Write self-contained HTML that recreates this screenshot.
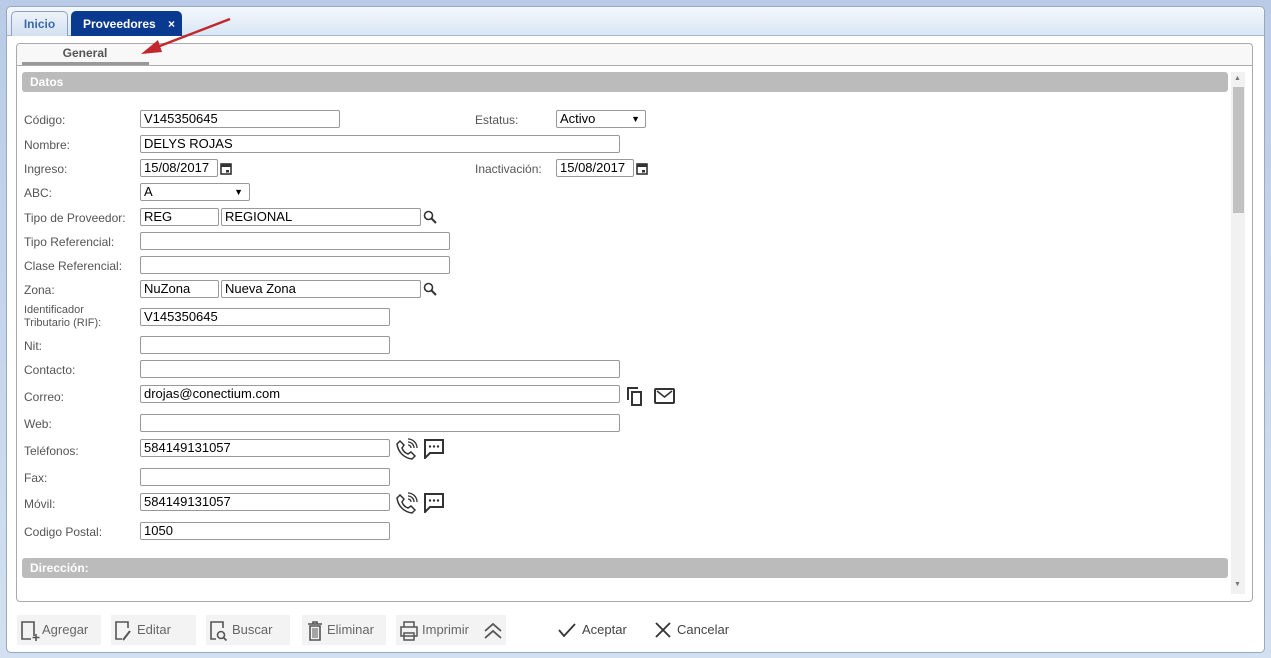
<!DOCTYPE html><html><head><meta charset="utf-8"><style>
*{box-sizing:border-box;margin:0;padding:0}
body{width:1271px;height:658px;background:linear-gradient(#b9cbe6,#d3e0f1);font-family:"Liberation Sans",sans-serif;position:relative;overflow:hidden}
.a{position:absolute}
.win{left:6px;top:6px;width:1259px;height:647px;background:#fff;border:1px solid #9aa8bb;border-radius:5px}
.hdr{left:7px;top:7px;width:1257px;height:29px;background:linear-gradient(#f4f8fd,#d9e6f5);border-bottom:1px solid #a9b8cc;border-radius:5px 5px 0 0}
.tab{top:11px;height:25px;border:1px solid #8fa3c0;border-bottom:none;border-radius:5px 5px 0 0;font-size:12px;font-weight:bold;line-height:24px}
.panel{left:16px;top:43px;width:1237px;height:559px;border:1px solid #aaa;border-radius:4px}
.lbl{font-size:12px;color:#555;left:24px}
.in{height:18px;border:1px solid #999;border-radius:2px;font-size:13px;line-height:16px;padding-left:3px;color:#000;background:#fff}
.bar{left:22px;width:1206px;height:20px;background:#bbb;border-radius:3px;color:#fff;font-weight:bold;font-size:12px;line-height:20px;padding-left:8px}
.btn{top:615px;height:30px;background:#f3f3f3;font-size:13px;color:#666;line-height:30px}
.btn svg{position:absolute;left:3px;top:5px}
.btn span{position:absolute;top:0}
</style></head><body>
<div class="a win"></div><div class="a hdr"></div>
<div class="a tab" style="left:11px;width:57px;background:linear-gradient(#eef3fa,#d3e0f0);color:#3a6aa8;text-align:center">Inicio</div>
<div class="a tab" style="left:71px;width:111px;background:#0a3a8f;border-color:#0a3a8f;color:#fff;padding-left:11px">Proveedores<span style="position:absolute;left:96px">×</span></div>
<div class="a panel"></div>
<div class="a" style="left:17px;top:44px;width:1235px;height:22px;background:#f8f8f8;border-bottom:1px solid #aaa;border-radius:4px 4px 0 0"></div>
<div class="a" style="left:22px;top:46px;width:126px;font-size:12px;font-weight:bold;color:#555;text-align:center">General</div>
<div class="a" style="left:22px;top:62px;width:127px;height:3px;background:#999"></div>
<svg class="a" style="left:138px;top:16px" width="100" height="42"><line x1="92" y1="3" x2="14" y2="33" stroke="#c1272d" stroke-width="2.5"/><polygon points="3,38 20,24 24,36" fill="#c1272d"/></svg>
<div class="a bar" style="top:72px">Datos</div>
<div class="a bar" style="top:558px">Dirección:</div>
<div class="a" style="left:1231px;top:72px;width:14px;height:522px;background:#f1f1f1"></div>
<div class="a" style="left:1233px;top:87px;width:11px;height:126px;background:#c1c1c1"></div>
<div class="a" style="left:1234px;top:75px;font-size:7px;color:#777">▲</div>
<div class="a" style="left:1234px;top:581px;font-size:7px;color:#777">▼</div>

<div class="a lbl" style="top:113px">Código:</div><div class="a in" style="left:140px;top:110px;width:200px">V145350645</div>
<div class="a lbl" style="left:475px;top:113px">Estatus:</div><div class="a in" style="left:556px;top:110px;width:90px">Activo<span style="position:absolute;right:5px;font-size:9px">▼</span></div>
<div class="a lbl" style="top:138px">Nombre:</div><div class="a in" style="left:140px;top:135px;width:480px">DELYS ROJAS</div>
<div class="a lbl" style="top:162px">Ingreso:</div><div class="a in" style="left:140px;top:159px;width:78px">15/08/2017</div>
<svg class="a" style="left:220px;top:162px" width="12" height="13"><rect x="1" y="2" width="10" height="10" fill="none" stroke="#333" stroke-width="1.6"/><rect x="1" y="2" width="10" height="3" fill="#333"/><rect x="6" y="8" width="3" height="2.5" fill="#333"/></svg>
<div class="a lbl" style="left:475px;top:162px">Inactivación:</div><div class="a in" style="left:556px;top:159px;width:78px">15/08/2017</div>
<svg class="a" style="left:636px;top:162px" width="12" height="13"><rect x="1" y="2" width="10" height="10" fill="none" stroke="#333" stroke-width="1.6"/><rect x="1" y="2" width="10" height="3" fill="#333"/><rect x="6" y="8" width="3" height="2.5" fill="#333"/></svg>
<div class="a lbl" style="top:186px">ABC:</div><div class="a in" style="left:140px;top:183px;width:110px">A<span style="position:absolute;right:6px;font-size:9px">▼</span></div>
<div class="a lbl" style="top:211px">Tipo de Proveedor:</div><div class="a in" style="left:140px;top:208px;width:79px">REG</div><div class="a in" style="left:221px;top:208px;width:200px">REGIONAL</div>
<svg class="a" style="left:423px;top:210px" width="14" height="14"><circle cx="5.5" cy="5.5" r="4" fill="none" stroke="#333" stroke-width="1.6"/><line x1="8.5" y1="8.5" x2="13" y2="13" stroke="#333" stroke-width="2"/></svg>
<div class="a lbl" style="top:235px">Tipo Referencial:</div><div class="a in" style="left:140px;top:232px;width:310px"></div>
<div class="a lbl" style="top:259px">Clase Referencial:</div><div class="a in" style="left:140px;top:256px;width:310px"></div>
<div class="a lbl" style="top:283px">Zona:</div><div class="a in" style="left:140px;top:280px;width:79px">NuZona</div><div class="a in" style="left:221px;top:280px;width:200px">Nueva Zona</div>
<svg class="a" style="left:423px;top:282px" width="14" height="14"><circle cx="5.5" cy="5.5" r="4" fill="none" stroke="#333" stroke-width="1.6"/><line x1="8.5" y1="8.5" x2="13" y2="13" stroke="#333" stroke-width="2"/></svg>
<div class="a lbl" style="top:304px;font-size:11px;line-height:13px">Identificador<br>Tributario (RIF):</div><div class="a in" style="left:140px;top:308px;width:250px">V145350645</div>
<div class="a lbl" style="top:339px">Nit:</div><div class="a in" style="left:140px;top:336px;width:250px"></div>
<div class="a lbl" style="top:363px">Contacto:</div><div class="a in" style="left:140px;top:360px;width:480px"></div>
<div class="a lbl" style="top:390px">Correo:</div><div class="a in" style="left:140px;top:385px;width:480px">drojas@conectium.com</div>
<svg class="a" style="left:626px;top:385px" width="20" height="22"><path d="M2 15V3h10" fill="none" stroke="#333" stroke-width="2"/><rect x="6" y="7" width="9" height="13" fill="none" stroke="#333" stroke-width="2"/></svg>
<svg class="a" style="left:654px;top:387px" width="22" height="18"><rect x="1" y="2" width="19" height="14" rx="1" fill="none" stroke="#333" stroke-width="2"/><path d="M3 4l7.5 6L18 4" fill="none" stroke="#333" stroke-width="1.6"/></svg>
<div class="a lbl" style="top:417px">Web:</div><div class="a in" style="left:140px;top:414px;width:480px"></div>
<div class="a lbl" style="top:444px">Teléfonos:</div><div class="a in" style="left:140px;top:439px;width:250px">584149131057</div>
<div class="a lbl" style="top:471px">Fax:</div><div class="a in" style="left:140px;top:468px;width:250px"></div>
<div class="a lbl" style="top:497px">Móvil:</div><div class="a in" style="left:140px;top:493px;width:250px">584149131057</div>
<div class="a lbl" style="top:525px">Codigo Postal:</div><div class="a in" style="left:140px;top:522px;width:250px">1050</div>

<svg class="a" style="left:396px;top:438px" width="22" height="22"><path d="M4 3l4 4-2 3c1 3 3 5 6 6l3-2 4 4-3 3C8 20 2 14 1 6z" fill="none" stroke="#333" stroke-width="1.5"/><path d="M12 7a3 3 0 013 3M12 4a6 6 0 016 6M12 1a9 9 0 019 9" fill="none" stroke="#333" stroke-width="1.3"/></svg>
<svg class="a" style="left:424px;top:439px" width="20" height="20"><path d="M1 1h18v13H6l-5 5z" fill="none" stroke="#333" stroke-width="2"/><circle cx="6" cy="7.5" r="1.2" fill="#333"/><circle cx="10" cy="7.5" r="1.2" fill="#333"/><circle cx="14" cy="7.5" r="1.2" fill="#333"/></svg>
<svg class="a" style="left:396px;top:492px" width="22" height="22"><path d="M4 3l4 4-2 3c1 3 3 5 6 6l3-2 4 4-3 3C8 20 2 14 1 6z" fill="none" stroke="#333" stroke-width="1.5"/><path d="M12 7a3 3 0 013 3M12 4a6 6 0 016 6M12 1a9 9 0 019 9" fill="none" stroke="#333" stroke-width="1.3"/></svg>
<svg class="a" style="left:424px;top:493px" width="20" height="20"><path d="M1 1h18v13H6l-5 5z" fill="none" stroke="#333" stroke-width="2"/><circle cx="6" cy="7.5" r="1.2" fill="#333"/><circle cx="10" cy="7.5" r="1.2" fill="#333"/><circle cx="14" cy="7.5" r="1.2" fill="#333"/></svg>

<div class="a btn" style="left:17px;width:84px"><svg width="20" height="22"><path d="M14 16V2H2v17h9" fill="none" stroke="#555" stroke-width="1.6"/><path d="M16 14v7M12.5 17.5h7" stroke="#555" stroke-width="1.6"/></svg><span style="left:25px">Agregar</span></div>
<div class="a btn" style="left:111px;width:85px"><svg width="20" height="22"><path d="M14 8V2H2v17h6" fill="none" stroke="#555" stroke-width="1.6"/><path d="M9 20l7-9" stroke="#555" stroke-width="2"/></svg><span style="left:26px">Editar</span></div>
<div class="a btn" style="left:206px;width:84px"><svg width="20" height="22"><path d="M14 8V2H2v17h5" fill="none" stroke="#555" stroke-width="1.6"/><circle cx="12" cy="15" r="3.5" fill="none" stroke="#555" stroke-width="1.6"/><path d="M14.5 17.5l3 3" stroke="#555" stroke-width="1.8"/></svg><span style="left:26px">Buscar</span></div>
<div class="a btn" style="left:302px;width:84px"><svg width="20" height="22"><path d="M3 4h14M8 4V2h4v2M5 6h10v14H5z" fill="none" stroke="#555" stroke-width="1.6"/><path d="M8 8v10M10 8v10M12 8v10" stroke="#555"/></svg><span style="left:25px">Eliminar</span></div>
<div class="a btn" style="left:396px;width:110px"><svg width="20" height="22"><path d="M5 7V2h10v5M2 7h16v9H2zM5 13h10v7H5z" fill="none" stroke="#555" stroke-width="1.5"/></svg><span style="left:26px">Imprimir</span><svg style="left:87px;top:8px" width="20" height="16"><path d="M2 8l8-7 8 7M2 15l8-7 8 7" fill="none" stroke="#555" stroke-width="1.8"/></svg></div>
<svg class="a" style="left:557px;top:622px" width="20" height="16"><path d="M2 8l5 6L18 2" fill="none" stroke="#333" stroke-width="1.8"/></svg>
<div class="a" style="left:582px;top:622px;font-size:13px;color:#444">Aceptar</div>
<svg class="a" style="left:654px;top:621px" width="18" height="18"><path d="M2 2l14 14M16 2L2 16" stroke="#333" stroke-width="1.8"/></svg>
<div class="a" style="left:677px;top:622px;font-size:13px;color:#444">Cancelar</div>
</body></html>
